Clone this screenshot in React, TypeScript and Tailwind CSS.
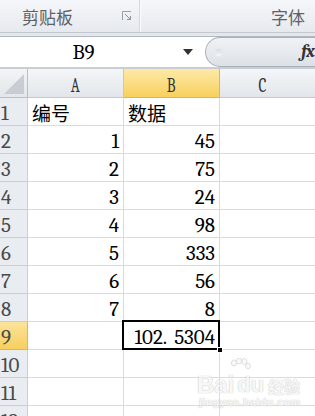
import React from "react";

const serif = "font-serif";
const cjk = "font-['Noto_Sans_CJK_SC']";
const sans = "font-['Liberation_Sans']";

const rows: { a?: string; b?: string; text?: boolean }[] = [
  { a: "编号", b: "数据", text: true },
  { a: "1", b: "45" },
  { a: "2", b: "75" },
  { a: "3", b: "24" },
  { a: "4", b: "98" },
  { a: "5", b: "333" },
  { a: "6", b: "56" },
  { a: "7", b: "8" },
  {},
  {},
  {},
  {},
];

function Launcher() {
  return (
    <svg width="10" height="10" viewBox="0 0 10 10" className="block">
      <path d="M0.5 9V0.5H9" fill="none" stroke="#9aa0a7" strokeWidth="1" />
      <path d="M3 3L8 8" stroke="#8a9098" strokeWidth="1" />
      <path d="M5 8.5H8.5V5" fill="none" stroke="#8a9098" strokeWidth="1" />
    </svg>
  );
}

export default function App() {
  return (
    <div className={`relative h-[416px] w-[315px] overflow-hidden bg-white ${serif}`}>
      {/* Ribbon */}
      <div className="flex h-[33px] border-b border-[#c4c9d0] bg-gradient-to-b from-[#f5f7fa] to-[#e6e9ee]">
        <div className="relative flex w-[139px] items-center">
          <span className={`ml-[22px] ${cjk} text-[17px] leading-none text-[#5e6167]`}>剪贴板</span>
          <div className="absolute left-[122px] top-[11px]">
            <Launcher />
          </div>
        </div>
        <div className="w-[1px] bg-[#d3d7dd]" />
        <div className="w-[1px] bg-[#fbfcfd]" />
        <div className="flex flex-1 items-center justify-end pr-[10px]">
          <span className={`${cjk} text-[17px] leading-none text-[#5e6167]`}>字体</span>
        </div>
      </div>
      <div className="h-[3px] bg-[#e4e7ec]" />
      {/* Formula bar */}
      <div className="flex h-[31px] border-t border-[#b1b8c2] bg-white">
        <div className="flex w-[167px] items-center justify-center">
          <span className="text-[21px] leading-none text-black">B9</span>
        </div>
        <div className="flex w-[38px] items-center justify-center pl-[4px]">
          <svg width="10" height="6" viewBox="0 0 10 6">
            <path d="M0 0H10L5 6Z" fill="#333" />
          </svg>
        </div>
        <div className="relative flex flex-1 items-center rounded-l-[15px] border border-r-0 border-[#a9b0ba] bg-gradient-to-b from-[#f0f2f5] to-[#dde1e6]">
          <div className="ml-[9px] h-[7px] w-[7px] rounded-full bg-gradient-to-b from-[#d7dbe0] to-[#f6f7f9] shadow-[0_0_0_1px_#e7eaee]" />
          <span className="ml-auto mr-[1px] text-[18px] font-bold italic leading-none tracking-[-1px] text-[#333]">
            fx
          </span>
        </div>
      </div>
      <div className="h-[2px] bg-[#c9ced5]" />
      {/* Column headers */}
      <div className="grid h-[29px] grid-cols-[28px_96px_96px_1fr]">
        <div className="relative border-b border-r border-[#b9bfc7] bg-gradient-to-b from-[#f2f4f6] to-[#e3e6ea]">
          <svg width="20" height="20" viewBox="0 0 20 20" className="absolute bottom-[3px] right-[3px]">
            <path d="M20 0V20H0Z" fill="#c9cdd3" />
          </svg>
        </div>
        <div className="flex items-end justify-center border-b border-r border-[#c2c8cf] bg-gradient-to-b from-[#f4f6f8] to-[#e2e6eb]">
          <span className="inline-block scale-x-[0.72] text-[21px] leading-[23px] text-[#333]">A</span>
        </div>
        <div className="flex items-end justify-center border-b border-r border-[#e1b74d] bg-gradient-to-b from-[#fde9a6] to-[#f8d05a]">
          <span className="inline-block scale-x-[0.72] text-[21px] leading-[23px] text-[#333]">B</span>
        </div>
        <div className="flex items-end justify-center border-b border-[#c2c8cf] bg-gradient-to-b from-[#f4f6f8] to-[#e2e6eb] pr-[10px]">
          <span className="inline-block scale-x-[0.72] text-[21px] leading-[23px] text-[#333]">C</span>
        </div>
      </div>
      {/* Rows */}
      {rows.map((r, i) => {
        const n = i + 1;
        const sel = n === 9;
        return (
          <div key={n} className="grid h-[28px] grid-cols-[28px_96px_96px_1fr]">
            <div
              className={`flex items-end border-b border-r pl-[1px] ${
                sel
                  ? "border-[#e1b74d] bg-gradient-to-b from-[#fbe39a] to-[#f7cf5c]"
                  : "border-[#c9ced5] bg-[#e9ecf0]"
              }`}
            >
              <span className="text-[21px] leading-[23px] text-[#4a4a4a]">{n}</span>
            </div>
            <div
              className={`flex items-end border-b border-r border-[#d9dcdf] ${
                r.text ? "justify-start pl-[4px]" : "justify-end pr-[4px]"
              }`}
            >
              {r.a && (
                <span
                  className={
                    r.text
                      ? `${cjk} text-[19px] leading-[24px] text-black`
                      : "text-[21px] leading-[23px] text-black"
                  }
                >
                  {r.a}
                </span>
              )}
            </div>
            <div
              className={`relative flex items-end border-b border-r border-[#d9dcdf] ${
                r.text ? "justify-start pl-[4px]" : "justify-end pr-[4px]"
              }`}
            >
              {r.b && (
                <span
                  className={
                    r.text
                      ? `${cjk} text-[19px] leading-[24px] text-black`
                      : "text-[21px] leading-[23px] text-black"
                  }
                >
                  {r.b}
                </span>
              )}
              {sel && (
                <>
                  <span className="relative z-10 text-[21px] leading-[23px] text-black">
                    102.<span className="ml-[7px]">5304</span>
                  </span>
                  <div className="pointer-events-none absolute left-[-2px] top-[-2px] h-[30px] w-[98px] border-2 border-black" />
                  <div className="absolute bottom-[-4px] right-[-4px] z-20 h-[6px] w-[6px] border border-white bg-black" />
                </>
              )}
            </div>
            <div className="border-b border-[#d9dcdf]" />
          </div>
        );
      })}
      {/* Watermark */}
      <div className="pointer-events-none absolute left-[197px] top-[358px] flex flex-col items-start opacity-70">
        <div className="ml-[32px] h-[16px] w-[20px]">
          <svg width="22" height="18" viewBox="0 0 22 18">
            <g fill="#f7f7f7" stroke="#c9c9c9" strokeWidth="0.8">
              <ellipse cx="5" cy="5" rx="2.6" ry="3" />
              <ellipse cx="10" cy="3" rx="2.6" ry="3" />
              <ellipse cx="15.5" cy="3.5" rx="2.6" ry="3" />
              <ellipse cx="19" cy="8" rx="2.4" ry="2.8" />
            </g>
          </svg>
        </div>
        <div className="flex items-end">
          <span className={`${sans} text-[24px] font-bold leading-[22px] text-[#f5f5f5] [text-shadow:0_0_1px_#b5b5b5,0_0_1px_#b5b5b5]`}>
            Bai
          </span>
          <span className={`ml-[2px] px-[1px] ${sans} text-[22px] font-bold leading-[22px] text-[#f5f5f5] [text-shadow:0_0_1px_#b5b5b5,0_0_1px_#b5b5b5]`}>
            du
          </span>
          <span className={`ml-[3px] ${cjk} text-[16px] font-bold leading-[20px] text-[#f5f5f5] [text-shadow:0_0_1px_#b5b5b5,0_0_1px_#b5b5b5]`}>
            经验
          </span>
        </div>
        <span className={`ml-[2px] ${sans} text-[11px] font-bold leading-[13px] tracking-[0.3px] text-[#f3f3f3] [text-shadow:0_0_1px_#bdbdbd,0_0_1px_#bdbdbd]`}>
          jingyan.baidu.com
        </span>
      </div>
    </div>
  );
}
